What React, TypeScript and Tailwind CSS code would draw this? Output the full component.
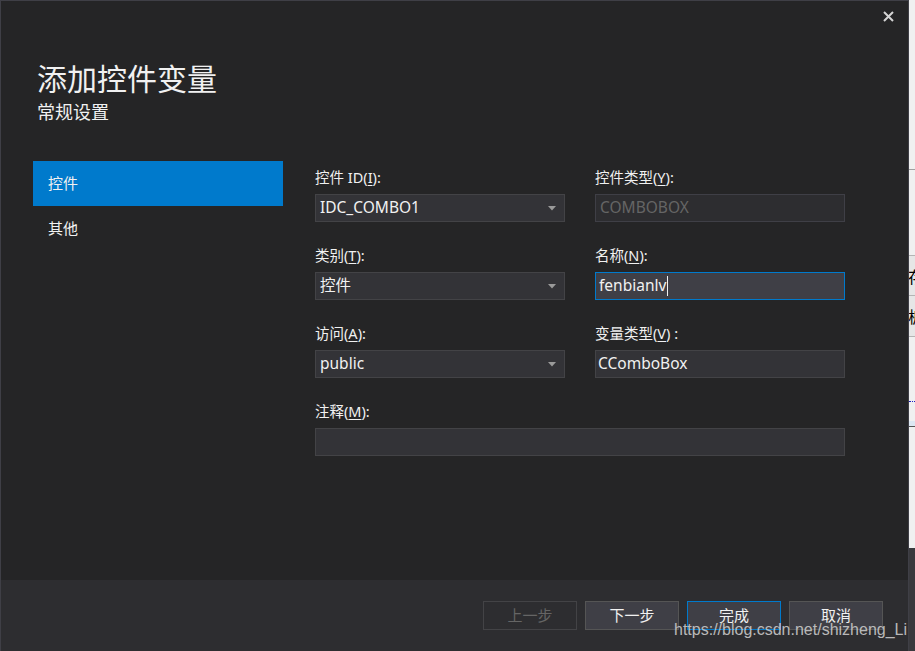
import React from "react";

const font = { fontFamily: '"Noto Sans", "Noto Sans CJK SC", sans-serif' };

function Arrow() {
  return (
    <svg width="8" height="5" viewBox="0 0 8 5" className="shrink-0">
      <path d="M0 0 L8 0 L4 4.5 Z" fill="#9a9a9a" />
    </svg>
  );
}

function Label({ children }: { children: React.ReactNode }) {
  return <div className="h-[20px] leading-[20px] text-[14.5px] text-[#f1f1f1] mb-[7px]">{children}</div>;
}

function Combo({ value }: { value: string }) {
  return (
    <div className="h-[28px] flex items-center justify-between bg-[#333337] border border-[#434346] pl-[4px] pr-[8px] text-[15.5px] text-[#f1f1f1]">
      <span>{value}</span>
      <Arrow />
    </div>
  );
}

function Field({ label, children }: { label: React.ReactNode; children: React.ReactNode }) {
  return (
    <div className="w-[250px]">
      <Label>{label}</Label>
      {children}
    </div>
  );
}

function U({ c }: { c: string }) {
  return <span className="underline underline-offset-2">{c}</span>;
}

export default function App() {
  return (
    <div className="w-[915px] h-[651px] flex bg-[#f0f0f0] overflow-hidden relative" style={font}>
      <div className="w-[909px] h-full flex flex-col bg-[#252526] border-l border-t border-r border-[#3f3f46] shrink-0">
        <div className="relative pl-[36px] pt-[60px]">
          <div className="absolute right-[14px] top-[10px] text-[#d4d4d4]">
            <svg width="11" height="11" viewBox="0 0 11 11">
              <path d="M1 1 L10 10 M10 1 L1 10" stroke="#d4d4d4" strokeWidth="2" />
            </svg>
          </div>
          <div className="text-[30px] leading-[36px] text-[#f1f1f1]">添加控件变量</div>
          <div className="text-[18px] leading-[22px] text-[#f1f1f1] mt-[4px]">常规设置</div>
        </div>
        <div className="flex-1 flex pt-[38px] pl-[32px]">
          <div className="w-[250px] flex flex-col">
            <div className="h-[45px] bg-[#007acc] flex items-center pl-[15px] text-[15px] text-[#f1f1f1]">控件</div>
            <div className="h-[45px] flex items-center pl-[15px] text-[15px] text-[#f1f1f1]">其他</div>
          </div>
          <div className="ml-[32px] pt-[6px] flex flex-col gap-[23px]">
            <div className="flex gap-[30px]">
              <Field label={<>控件 ID(<U c="I" />):</>}>
                <Combo value="IDC_COMBO1" />
              </Field>
              <Field label={<>控件类型(<U c="Y" />):</>}>
                <div className="h-[28px] flex items-center bg-[#2d2d30] border border-[#3f3f46] pl-[4px] text-[15.5px] text-[#656565]">COMBOBOX</div>
              </Field>
            </div>
            <div className="flex gap-[30px]">
              <Field label={<>类别(<U c="T" />):</>}>
                <Combo value="控件" />
              </Field>
              <Field label={<>名称(<U c="N" />):</>}>
                <div className="h-[28px] flex items-center bg-[#3f3f46] border border-[#007acc] pl-[3px] text-[15.5px] text-[#f1f1f1]">
                  <span>fenbianlv</span>
                  <span className="w-px h-[20px] bg-[#f1f1f1] ml-[1px]" />
                </div>
              </Field>
            </div>
            <div className="flex gap-[30px]">
              <Field label={<>访问(<U c="A" />):</>}>
                <Combo value="public" />
              </Field>
              <Field label={<>变量类型(<U c="V" />) :</>}>
                <div className="h-[28px] flex items-center bg-[#333337] border border-[#434346] pl-[2px] text-[15.5px] text-[#f1f1f1]">CComboBox</div>
              </Field>
            </div>
            <div className="w-[530px]">
              <Label>注释(<U c="M" />):</Label>
              <div className="h-[28px] bg-[#333337] border border-[#434346]" />
            </div>
          </div>
        </div>
        <div className="h-[71px] bg-[#2d2d30] flex justify-end items-start pt-[21px] pr-[25px] gap-[8px] text-[15px]">
          <div className="w-[94px] h-[29px] border border-[#434346] flex items-center justify-center text-[#656565]">上一步</div>
          <div className="w-[94px] h-[29px] bg-[#3f3f46] border border-[#555555] flex items-center justify-center text-[#f1f1f1]">下一步</div>
          <div className="w-[94px] h-[29px] bg-[#3f3f46] border border-[#007acc] flex items-center justify-center text-[#f1f1f1]">完成</div>
          <div className="w-[94px] h-[29px] bg-[#3f3f46] border border-[#555555] flex items-center justify-center text-[#f1f1f1]">取消</div>
        </div>
      </div>
      <div className="flex-1 flex flex-col overflow-hidden">
        <div className="h-[170px] bg-[#f0f0f0] border-b border-[#a0a0a0]" />
        <div className="h-[85px] bg-[#f0f0f0]" />
        <div className="h-[40px] bg-[#e6e6e6] border-t border-[#b4b4b4] flex items-center text-[16px] text-black -ml-[1px]" style={{ fontFamily: '"Noto Sans CJK SC", sans-serif' }}>存</div>
        <div className="h-[42px] bg-[#e6e6e6] border-t border-b border-[#b4b4b4] flex items-center text-[16px] text-black -ml-[1px]" style={{ fontFamily: '"Noto Sans CJK SC", sans-serif' }}>板</div>
        <div className="h-[64px] bg-[#f0f0f0]" />
        <div className="h-px border-t border-dotted border-[#2020c0]" />
        <div className="h-[19px] bg-[#f0f0f0]" />
        <div className="h-[6px] bg-[#dde8f3] border-b border-[#555555]" />
        <div className="h-[121px] bg-[#f0f0f0]" />
        <div className="flex-1 bg-[#3a3a3e]" />
      </div>
      <div className="absolute left-[674px] top-[618px] text-[16px] leading-[24px] text-[#c8c8c8] opacity-90" style={{ fontFamily: '"Liberation Sans", Arial, sans-serif' }}>https://blog.csdn.net/shizheng_Li</div>
    </div>
  );
}
